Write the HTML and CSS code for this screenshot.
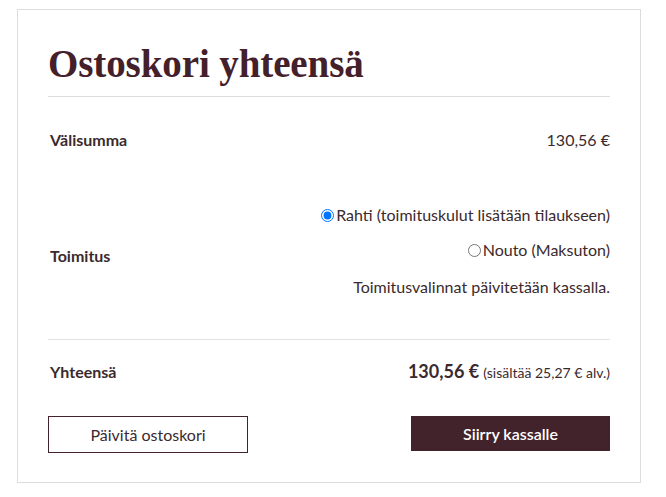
FILE: index.html
```html
<!DOCTYPE html>
<html lang="fi">
<head>
<meta charset="utf-8">
<title>Ostoskori yhteensä</title>
<link rel="stylesheet" href="styles.css">
</head>
<body>
<div class="cart-totals">
  <h2 class="title">Ostoskori yhteensä</h2>
  <div class="row row-subtotal">
    <div class="label">Välisumma</div>
    <div class="value">130,56 €</div>
  </div>
  <div class="row row-shipping">
    <div class="label">Toimitus</div>
    <div class="value shipping">
      <label class="opt"><input type="radio" name="ship" checked>Rahti (toimituskulut lisätään tilaukseen)</label>
      <label class="opt"><input type="radio" name="ship">Nouto (Maksuton)</label>
      <p class="note">Toimitusvalinnat päivitetään kassalla.</p>
    </div>
  </div>
  <div class="row row-total">
    <div class="label">Yhteensä</div>
    <div class="value"><strong class="amount">130,56 €</strong> <small class="tax">(sisältää 25,27 € alv.)</small></div>
  </div>
  <div class="actions">
    <button class="btn btn-outline">Päivitä ostoskori</button>
    <button class="btn btn-primary">Siirry kassalle</button>
  </div>
</div>
</body>
</html>
```

FILE: styles.css
```css
* { box-sizing: border-box; }
body {
  margin: 9px 0 0 17px;
  font-family: "Lato", "Open Sans", sans-serif;
  color: #3a2a2e;
  background: #fff;
}
.cart-totals {
  width: 624px;
  height: 474px;
  border: 1px solid #dcdcdc;
  padding: 0 30px;
}
.title {
  margin: 0;
  padding-top: 34px;
  padding-bottom: 12px;
  font-family: "Liberation Serif", "DejaVu Serif", serif;
  font-weight: bold;
  font-size: 39px;
  line-height: 40px;
  letter-spacing: -0.1px;
  color: #43202a;
  border-bottom: 1px solid #dcdcdc;
}
.row {
  display: flex;
  justify-content: space-between;
  font-size: 16px;
  line-height: 24px;
}
.label { font-weight: bold; padding-left: 2px; }
.value { text-align: right; }
.row-subtotal { padding: 31px 0 20px; }
.row-shipping { padding: 31px 0 30px; align-items: center; border-bottom: 1px solid #e2e2e2; }
.shipping { display: flex; flex-direction: column; align-items: flex-end; }
.opt { display: flex; align-items: center; height: 24px; margin-bottom: 11px; }
.opt input { margin: 1px 2px 0 0; width: 13px; height: 13px; }
.note { margin: 2px 0 10px; }
.row-total { padding: 19px 0 31px; align-items: center; }
.amount { font-size: 18px; }
.tax { font-size: 14px; }
.actions { display: flex; justify-content: space-between; align-items: flex-start; }
.btn {
  width: 200px;
  font-family: inherit;
  font-size: 16px;
  cursor: pointer;
}
.btn-outline {
  height: 37px;
  background: #fff;
  border: 1px solid #43232b;
  color: #3a2a2e;
}
.btn-primary {
  height: 35px;
  width: 199px;
  background: #43232b;
  border: 0;
  color: #fff;
  font-weight: 600;
}
```
